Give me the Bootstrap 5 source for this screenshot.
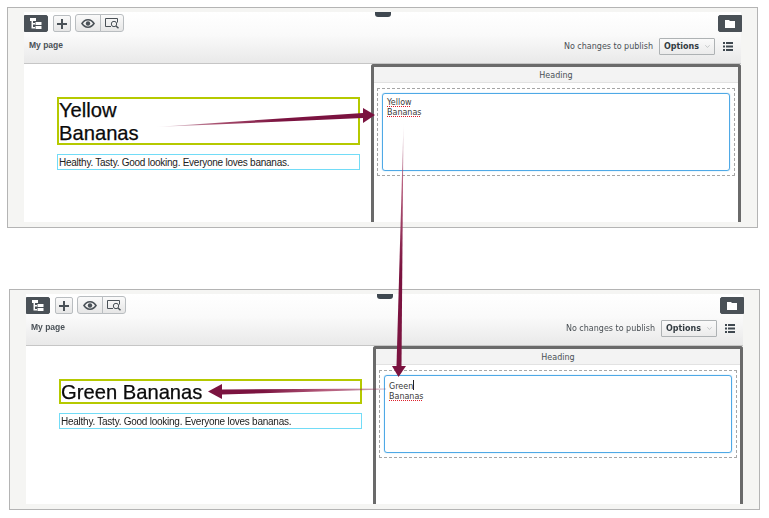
<!DOCTYPE html>
<html lang="en">
<head>
<meta charset="utf-8">
<title>Editing a heading</title>
<link href="https://cdn.jsdelivr.net/npm/bootstrap@5.3.0/dist/css/bootstrap.min.css" rel="stylesheet">
<style>
html,body{background:#fff;margin:0;overflow:hidden}
.stage{position:relative;width:769px;height:518px;padding-top:7px;filter:blur(.35px)}
.shot{width:751px;height:221px;border:1px solid #b4b4b4;background:#f5f5f3;padding:4px 16px 5px 16px;margin-left:7px}
.shot-b{margin-left:9px;margin-top:61px}
.editor{height:100%;background:#fff;position:relative}
.edbar{height:52px;flex:none;background:linear-gradient(#fff,#fafafa 45%,#e9e9e9);border-bottom:1px solid #c6c6c6;padding:3px 0 0 0;position:relative}
.notch{position:absolute;left:351px;top:0;width:16px;height:5px;background:#3f4850;border-radius:0 0 3px 3px}
.tbtn{height:17px;padding:0;border-radius:2px;display:flex;align-items:center;justify-content:center;border:1px solid #b9bdc0;background:linear-gradient(#fafafa,#e6e6e6);--bs-btn-hover-bg:#eee}
.tbtn-dark{width:24px;background:#4a5157;border-color:#4a5157;border-radius:0 2px 2px 0}
.tbtn-plus{width:18px;margin-left:5px}
.tgroup{margin-left:4px;margin-top:-1px;height:18px}
.tgroup .tbtn{height:18px;width:26px;border-radius:3px 0 0 3px}
.tgroup .tbtn+.tbtn{width:24px;border-radius:0 3px 3px 0;margin-left:-1px}
.tbtn-folder{width:24px;background:#4a5157;border-color:#4a5157;border-radius:2px 0 0 2px;margin-right:-1px}
.pagename{font:bold 8.5px/10px "Liberation Sans",sans-serif;color:#4a5157;position:absolute;left:5px;top:28px}
.publish{position:absolute;right:8px;top:26px;gap:6px;font:8px/10px "DejaVu Sans",sans-serif;color:#4a5055}
.optbtn{width:56px;height:17px;padding:0 4px;border:1px solid #aeb2b4;border-radius:1px;background:linear-gradient(#fafafa,#ebebeb);font:bold 8px/15px "DejaVu Sans",sans-serif;color:#333c42;gap:6px;margin-right:2px}
.edbody{min-height:0}
.pageside{width:347px;flex:none;position:relative;background:#fff}
.hbox{position:absolute;left:33px;top:33px;width:303px;border:2px solid #b5c900;padding:0;font:20.2px/22.5px "Liberation Sans",sans-serif;color:#0a0a0a;margin:0;font-weight:400;-webkit-text-stroke:.25px #0a0a0a}
.hbox-one{height:48px}
.hbox-two{height:25px}
.pbox{position:absolute;left:33px;width:303px;height:16px;border:1px solid #72dcf7;padding-left:1px;font:10px/15px "Liberation Sans",sans-serif;letter-spacing:-.25px;color:#222;margin:0}
.pbox-one{top:90px}
.pbox-two{top:67px}
.propside{flex:1;min-width:0;border:solid #6a6a6a;border-width:3px 3px 0 3px;border-radius:3px 3px 0 0;background:#fff}
.prophead{height:16px;flex:none;background:#f3f3f3;border-bottom:1px solid #e2e2e2;font:8px/17px "DejaVu Sans",sans-serif;color:#4a5055;text-align:center}
.dashbox{margin:5px 3px 0 3px;height:88px;border:1px dashed #a6a6a6;padding:4px}
.fieldbox{height:78px;border:1px solid #4fa9e6;box-shadow:0 0 1px #4fa9e6;border-radius:3px;padding:4px;font:8px/10px "DejaVu Sans",sans-serif;color:#3a3a3a}
.spell{text-decoration:underline dotted #e0202c 1px;text-underline-offset:1px}
.caret{display:inline-block;width:1px;height:10px;background:#222;vertical-align:-1px}
.arrows{position:absolute;left:0;top:0;width:769px;height:518px;pointer-events:none}
</style>
</head>
<body>
<div class="stage">

<section class="shot">
  <div class="editor d-flex flex-column">
    <div class="edbar">
      <span class="notch"></span>
      <div class="d-flex align-items-start">
        <button type="button" class="btn tbtn tbtn-dark" aria-label="Tree"><svg width="12" height="11" viewBox="0 0 12 11"><path fill="#fff" d="M0 0h6v3H3v2h2v1.500H3V9h2v1.500H1.500V3H0z"/><rect x="5.500" y="4" width="6" height="3" fill="#fff"/><rect x="5.500" y="8" width="6" height="3" fill="#fff"/></svg></button>
        <button type="button" class="btn tbtn tbtn-plus" aria-label="Add"><svg width="10" height="10" viewBox="0 0 10 10"><path fill="#4a5157" d="M4 0h2v4h4v2H6v4H4V6H0V4h4z"/></svg></button>
        <div class="d-flex tgroup">
          <button type="button" class="btn tbtn" aria-label="View"><svg width="14" height="9" viewBox="0 0 14 9"><path fill="#4a5157" fill-rule="evenodd" d="M7 0c3 0 5.500 2 7 4.500C12.500 7 10 9 7 9S1.500 7 0 4.500C1.500 2 4 0 7 0zm0 1.600c-2 0-3.800 1.200-5 2.900 1.200 1.700 3 2.900 5 2.900s3.800-1.200 5-2.900c-1.200-1.700-3-2.900-5-2.900z"/><circle cx="7" cy="4.500" r="2.200" fill="#4a5157"/></svg></button>
          <button type="button" class="btn tbtn" aria-label="Preview"><svg width="15" height="12" viewBox="0 0 15 12" fill="none" stroke="#4a5157"><path d="M6 9.500H.5v-8h12v4"/><circle cx="9" cy="7" r="2.700"/><path stroke-width="1.500" d="M11 9l2.500 2.300"/></svg></button>
        </div>
        <button type="button" class="btn tbtn tbtn-folder ms-auto" aria-label="Folder"><svg width="10" height="8" viewBox="0 0 10 8"><path fill="#fff" d="M0 0h4l1 1h5v7H0z"/></svg></button>
      </div>
      <div class="pagename">My page</div>
      <div class="publish d-flex align-items-center">
        <span>No changes to publish</span>
        <button type="button" class="btn optbtn d-flex align-items-center justify-content-between"><span>Options</span><svg width="8" height="5" viewBox="0 0 8 5" fill="none" stroke="#a9adb0"><path d="M.5.500 4 4 7.500.500"/></svg></button>
        <svg width="10" height="9" viewBox="0 0 10 9" fill="#3f4850" aria-hidden="true"><rect width="2" height="2"/><rect x="3" width="7" height="2"/><rect y="3.500" width="2" height="2"/><rect x="3" y="3.500" width="7" height="2"/><rect y="7" width="2" height="2"/><rect x="3" y="7" width="7" height="2"/></svg>
      </div>
    </div>
    <div class="edbody d-flex flex-grow-1">
      <div class="pageside">
        <h2 class="hbox hbox-one">Yellow<br>Bananas</h2>
        <p class="pbox pbox-one">Healthy. Tasty. Good looking. Everyone loves bananas.</p>
      </div>
      <div class="propside d-flex flex-column">
        <div class="prophead">Heading</div>
        <div class="dashbox"><div class="fieldbox"><span class="spell">Yellow</span><br><span class="spell">Bananas</span></div></div>
      </div>
    </div>
  </div>
</section>

<section class="shot shot-b">
  <div class="editor d-flex flex-column">
    <div class="edbar">
      <span class="notch"></span>
      <div class="d-flex align-items-start">
        <button type="button" class="btn tbtn tbtn-dark" aria-label="Tree"><svg width="12" height="11" viewBox="0 0 12 11"><path fill="#fff" d="M0 0h6v3H3v2h2v1.500H3V9h2v1.500H1.500V3H0z"/><rect x="5.500" y="4" width="6" height="3" fill="#fff"/><rect x="5.500" y="8" width="6" height="3" fill="#fff"/></svg></button>
        <button type="button" class="btn tbtn tbtn-plus" aria-label="Add"><svg width="10" height="10" viewBox="0 0 10 10"><path fill="#4a5157" d="M4 0h2v4h4v2H6v4H4V6H0V4h4z"/></svg></button>
        <div class="d-flex tgroup">
          <button type="button" class="btn tbtn" aria-label="View"><svg width="14" height="9" viewBox="0 0 14 9"><path fill="#4a5157" fill-rule="evenodd" d="M7 0c3 0 5.500 2 7 4.500C12.500 7 10 9 7 9S1.500 7 0 4.500C1.500 2 4 0 7 0zm0 1.600c-2 0-3.800 1.200-5 2.900 1.200 1.700 3 2.900 5 2.900s3.800-1.200 5-2.900c-1.200-1.700-3-2.900-5-2.900z"/><circle cx="7" cy="4.500" r="2.200" fill="#4a5157"/></svg></button>
          <button type="button" class="btn tbtn" aria-label="Preview"><svg width="15" height="12" viewBox="0 0 15 12" fill="none" stroke="#4a5157"><path d="M6 9.500H.5v-8h12v4"/><circle cx="9" cy="7" r="2.700"/><path stroke-width="1.500" d="M11 9l2.500 2.300"/></svg></button>
        </div>
        <button type="button" class="btn tbtn tbtn-folder ms-auto" aria-label="Folder"><svg width="10" height="8" viewBox="0 0 10 8"><path fill="#fff" d="M0 0h4l1 1h5v7H0z"/></svg></button>
      </div>
      <div class="pagename">My page</div>
      <div class="publish d-flex align-items-center">
        <span>No changes to publish</span>
        <button type="button" class="btn optbtn d-flex align-items-center justify-content-between"><span>Options</span><svg width="8" height="5" viewBox="0 0 8 5" fill="none" stroke="#a9adb0"><path d="M.5.500 4 4 7.500.500"/></svg></button>
        <svg width="10" height="9" viewBox="0 0 10 9" fill="#3f4850" aria-hidden="true"><rect width="2" height="2"/><rect x="3" width="7" height="2"/><rect y="3.500" width="2" height="2"/><rect x="3" y="3.500" width="7" height="2"/><rect y="7" width="2" height="2"/><rect x="3" y="7" width="7" height="2"/></svg>
      </div>
    </div>
    <div class="edbody d-flex flex-grow-1">
      <div class="pageside">
        <h2 class="hbox hbox-two">Green Bananas</h2>
        <p class="pbox pbox-two">Healthy. Tasty. Good looking. Everyone loves bananas.</p>
      </div>
      <div class="propside d-flex flex-column">
        <div class="prophead">Heading</div>
        <div class="dashbox"><div class="fieldbox">Green<span class="caret"></span><br><span class="spell">Bananas</span></div></div>
      </div>
    </div>
  </div>
</section>

<svg class="arrows" viewBox="0 0 769 518" aria-hidden="true">
  <defs>
    <linearGradient id="fadeA" gradientUnits="userSpaceOnUse" x1="155" y1="127" x2="363" y2="115"><stop offset="0" stop-color="#7b1340" stop-opacity="0"/><stop offset=".3" stop-color="#a8506f"/><stop offset=".6" stop-color="#7b1340"/></linearGradient>
    <linearGradient id="fadeB" gradientUnits="userSpaceOnUse" x1="403" y1="122" x2="399" y2="366"><stop offset="0" stop-color="#7b1340" stop-opacity="0"/><stop offset=".25" stop-color="#b8607f"/><stop offset=".6" stop-color="#7b1340"/></linearGradient>
    <linearGradient id="fadeC" gradientUnits="userSpaceOnUse" x1="386" y1="389" x2="222" y2="391"><stop offset="0" stop-color="#7b1340" stop-opacity=".25"/><stop offset=".35" stop-color="#b8607f"/><stop offset=".75" stop-color="#7b1340"/></linearGradient>
  </defs>
  <path fill="url(#fadeA)" d="M155 127 363 113V118z"/>
  <path fill="#7b1340" d="M363 108 375 115 363 123z"/>
  <path fill="url(#fadeB)" d="M403.500 122 401.500 366H396.500z"/>
  <path fill="#7b1340" d="M392 366H406L398.500 377z"/>
  <path fill="url(#fadeC)" d="M386 388.500V389.500L222 394.500V389.500z"/>
  <path fill="#7b1340" d="M222 384 208 391.500 222 399z"/>
</svg>
</div>
</body>
</html>
